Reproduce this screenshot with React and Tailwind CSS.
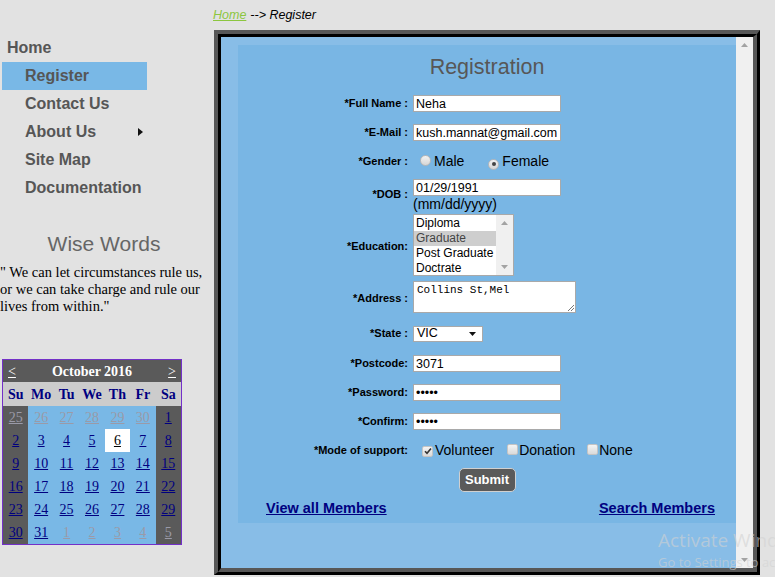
import React from "react";

const sans = "font-['Liberation_Sans',Arial,sans-serif]";
const serif = "font-['Liberation_Serif','Times_New_Roman',serif]";

const navItems = ["Home", "Register", "Contact Us", "About Us", "Site Map", "Documentation"];

const weeks = [
  [[25, 1], [26, 1], [27, 1], [28, 1], [29, 1], [30, 1], [1, 0]],
  [[2, 0], [3, 0], [4, 0], [5, 0], [6, 0], [7, 0], [8, 0]],
  [[9, 0], [10, 0], [11, 0], [12, 0], [13, 0], [14, 0], [15, 0]],
  [[16, 0], [17, 0], [18, 0], [19, 0], [20, 0], [21, 0], [22, 0]],
  [[23, 0], [24, 0], [25, 0], [26, 0], [27, 0], [28, 0], [29, 0]],
  [[30, 0], [31, 0], [1, 1], [2, 1], [3, 1], [4, 1], [5, 1]],
];

function Calendar() {
  return (
    <div className={`ml-[2px] w-[180px] border border-[#7330c8] ${serif}`}>
      <div className="flex h-[22px] items-center justify-between bg-[#5a5a5a] px-[5px] text-[14px] text-white">
        <span className="underline">&lt;</span>
        <span className="font-bold">October 2016</span>
        <span className="underline">&gt;</span>
      </div>
      <div className="grid h-[24px] grid-cols-7 items-center bg-[#cccccc] text-center text-[14px] font-bold text-[#000080]">
        {["Su", "Mo", "Tu", "We", "Th", "Fr", "Sa"].map((d) => (
          <span key={d}>{d}</span>
        ))}
      </div>
      {weeks.map((week, wi) => (
        <div key={wi} className="grid h-[23px] grid-cols-7 text-center text-[14px]">
          {week.map(([d, other], i) => {
            const weekend = i === 0 || i === 6;
            const today = d === 6 && !other;
            const bg = today ? "bg-white" : weekend ? "bg-[#5a5a5a]" : "bg-[#79b8e6]";
            const color = other ? "text-[#9a9aa8]" : today ? "text-black" : "text-[#000080]";
            return (
              <div key={i} className={`flex items-center justify-center ${bg}`}>
                <span className={`underline ${color}`}>{d}</span>
              </div>
            );
          })}
        </div>
      ))}
    </div>
  );
}

function Sidebar() {
  return (
    <aside className="w-[208px] shrink-0 pt-[34px]">
      <ul className={`${sans} text-[16px] font-bold text-[#565656]`}>
        {navItems.map((item) => {
          if (item === "Home") {
            return (
              <li key={item} className="flex h-[28px] items-center pl-[7px]">
                {item}
              </li>
            );
          }
          const active = item === "Register";
          return (
            <li
              key={item}
              className={`ml-[2px] flex h-[28px] w-[145px] items-center pl-[23px] ${active ? "bg-[#79b8e6]" : ""}`}
            >
              <span className="flex-1">{item}</span>
              {item === "About Us" && (
                <svg width="5" height="8" viewBox="0 0 5 8" className="mr-[4px]">
                  <path d="M0 0 L5 4 L0 8 Z" fill="#111" />
                </svg>
              )}
            </li>
          );
        })}
      </ul>
      <h2 className={`mt-[30px] h-[24px] text-center text-[21px] leading-[24px] text-[#666] ${sans}`}>Wise Words</h2>
      <p className={`mt-[8px] w-[208px] text-[14.5px] leading-[17px] text-black ${serif}`}>
        " We can let circumstances rule us, or we can take charge and rule our lives from within."
      </p>
      <div className="mt-[44px]">
        <Calendar />
      </div>
    </aside>
  );
}

function TextBox({ value, type = "text" }) {
  return (
    <input
      readOnly
      type={type}
      value={value}
      className={`block h-[17px] w-[148px] border border-[#a9a9a9] bg-white px-[2px] text-[12.5px] leading-[15px] text-black outline-none ${sans}`}
    />
  );
}

function Radio({ checked }) {
  return (
    <span className="relative inline-flex h-[11px] w-[11px] items-center justify-center rounded-full border border-[#b8b8b8] bg-gradient-to-b from-[#f2f2f2] to-[#d6d6d6]">
      {checked && <span className="h-[4px] w-[4px] rounded-full bg-[#444]" />}
    </span>
  );
}

function Check({ checked }) {
  return (
    <span className="inline-flex h-[11px] w-[11px] items-center justify-center rounded-[2px] border border-[#c4c4c4] bg-gradient-to-b from-[#f4f4f4] to-[#dadada]">
      {checked && (
        <svg width="8" height="8" viewBox="0 0 8 8">
          <path d="M1 4.2 L3 6.3 L7 1.5" stroke="#333" strokeWidth="1.6" fill="none" />
        </svg>
      )}
    </span>
  );
}

function Row({ label, h, children, pt }) {
  return (
    <div className={`flex ${h}`}>
      <div className="flex w-[98px] shrink-0 items-center justify-end text-[11px] font-bold text-black">{label}</div>
      <div className={`ml-[5px] flex flex-col ${pt ? pt : "justify-center"}`}>{children}</div>
    </div>
  );
}

function UpTri({ color = "#a3a3a3" }) {
  return (
    <svg width="7" height="4" viewBox="0 0 7 4">
      <path d="M0 4 L3.5 0 L7 4 Z" fill={color} />
    </svg>
  );
}

function DownTri({ color = "#a3a3a3" }) {
  return (
    <svg width="7" height="4" viewBox="0 0 7 4">
      <path d="M0 0 L3.5 4 L7 0 Z" fill={color} />
    </svg>
  );
}

function RegisterForm() {
  return (
    <div className={`h-[478px] bg-[#79b6e4] ${sans}`}>
      <h1 className="flex h-[44px] items-center justify-center text-[21.5px] text-[#575757]">Registration</h1>
      <div className="ml-[72px]">
        <Row label="*Full Name :" h="h-[29px]">
          <TextBox value="Neha" />
        </Row>
        <Row label="*E-Mail :" h="h-[29px]">
          <TextBox value="kush.mannat@gmail.com" />
        </Row>
        <Row label="*Gender :" h="h-[29px]">
          <div className="flex items-center text-[14px] text-black">
            <span className="ml-[7px]"><Radio /></span>
            <span className="ml-[3px]">Male</span>
            <span className="ml-[24px]"><Radio checked /></span>
            <span className="ml-[3px]">Female</span>
          </div>
        </Row>
        <Row label="*DOB :" h="h-[37px]" pt="pt-[3px]">
          <TextBox value="01/29/1991" />
          <span className="text-[14px] leading-[17px] text-black">(mm/dd/yyyy)</span>
        </Row>
        <Row label="*Education:" h="h-[66px]" pt="pt-[1px]">
          <div className="flex h-[62px] w-[101px] border border-[#a9a9a9] bg-white text-[12px] leading-[15px] text-black">
            <div className="flex-1 pt-[1px]">
              <div className="px-[2px]">Diploma</div>
              <div className="bg-[#cecece] px-[2px] text-[#444]">Graduate</div>
              <div className="px-[2px]">Post Graduate</div>
              <div className="px-[2px]">Doctrate</div>
            </div>
            <div className="flex w-[17px] flex-col items-center justify-between bg-[#f0f0f0] py-[6px]">
              <UpTri />
              <DownTri />
            </div>
          </div>
        </Row>
        <Row label="*Address :" h="h-[39px]" pt="pt-[2px]">
          <div className="relative h-[32px] w-[163px] border border-[#a9a9a9] bg-white px-[3px] pt-[1px] font-['Liberation_Mono',monospace] text-[11px] leading-[14px] text-black">
            Collins St,Mel
            <svg width="7" height="7" viewBox="0 0 7 7" className="absolute bottom-[1px] right-[1px]">
              <path d="M1 7 L7 1 M4 7 L7 4" stroke="#777" strokeWidth="1" />
            </svg>
          </div>
        </Row>
        <Row label="*State :" h="h-[31px]">
          <div className="flex h-[16px] w-[70px] items-center justify-between border border-[#a9a9a9] bg-white pl-[3px] pr-[6px] text-[12.5px] text-black">
            <span>VIC</span>
            <DownTri color="#111" />
          </div>
        </Row>
        <Row label="*Postcode:" h="h-[29px]">
          <TextBox value="3071" />
        </Row>
        <Row label="*Password:" h="h-[29px]">
          <TextBox value="neha1" type="password" />
        </Row>
        <Row label="*Confirm:" h="h-[29px]">
          <TextBox value="neha1" type="password" />
        </Row>
        <Row label="*Mode of support:" h="h-[29px]">
          <div className="flex items-center text-[14px] text-black">
            <span className="ml-[9px]"><Check checked /></span>
            <span className="ml-[2px]">Volunteer</span>
            <span className="ml-[13px]"><Check /></span>
            <span className="ml-[1px]">Donation</span>
            <span className="ml-[12px]"><Check /></span>
            <span className="ml-[1px]">None</span>
          </div>
        </Row>
      </div>
      <div className="flex h-[30px] items-center justify-center">
        <button className="h-[24px] w-[57px] rounded-[5px] border border-[#d0d0d0] bg-[#5a5a5a] text-[13px] font-bold text-white">
          Submit
        </button>
      </div>
      <div className="flex h-[28px] items-center justify-between pl-[28px] pr-[21px] text-[14.5px] font-bold text-[#000080]">
        <a className="underline">View all Members</a>
        <a className="underline">Search Members</a>
      </div>
    </div>
  );
}

export default function App() {
  return (
    <div className={`relative flex h-screen w-full overflow-hidden bg-[#e2e2e2] ${sans}`}>
      <Sidebar />
      <main className="ml-[5px] flex flex-col">
        <div className="flex h-[30px] items-center pt-[1px] text-[12.5px] italic text-black">
          <a className="text-[#8cc63f] underline">Home</a>
          <span className="ml-[4px]">--&gt; Register</span>
        </div>
        <div className="ml-[1px] h-[545px] w-[546px] border-b-[3px] border-l-[4px] border-r-[3px] border-t-[4px] border-b-black border-l-[#575757] border-r-black border-t-[#575757]">
          <div className="flex h-full w-full border-b-[4px] border-l-[3px] border-r-[4px] border-t-[3px] border-b-[#575757] border-l-black border-r-[#575757] border-t-black">
            <div className="flex-1 overflow-hidden bg-[#88bde7] pl-[17px] pt-[8px]">
              <RegisterForm />
            </div>
            <div className="flex w-[17px] flex-col items-center justify-between bg-[#f0f0f0] py-[6px]">
              <UpTri />
              <DownTri />
            </div>
          </div>
        </div>
      </main>
      <div className="pointer-events-none absolute left-[658px] top-[527px] font-['Open_Sans',sans-serif] text-[rgba(210,210,210,0.6)]">
        <div className="whitespace-nowrap text-[19px] leading-[26px]">Activate Windows</div>
        <div className="whitespace-nowrap text-[13px] leading-[18px]">Go to Settings to activate Windows.</div>
      </div>
    </div>
  );
}
